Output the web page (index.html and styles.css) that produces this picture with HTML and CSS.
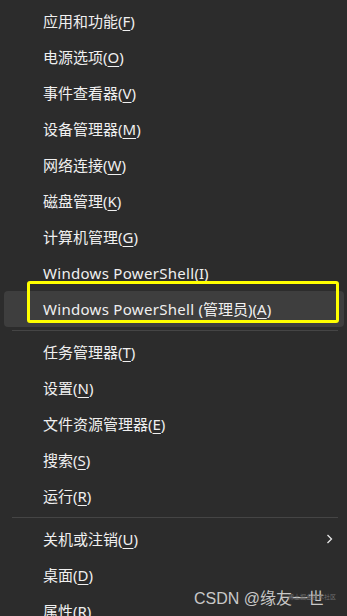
FILE: index.html
```html
<!DOCTYPE html>
<html lang="zh-CN">
<head>
<meta charset="utf-8">
<title>Menu</title>
<link rel="stylesheet" href="styles.css">
</head>
<body>
<div class="menu">
  <div class="item">应用和功能(<u>F</u>)</div>
  <div class="item">电源选项(<u>O</u>)</div>
  <div class="item">事件查看器(<u>V</u>)</div>
  <div class="item">设备管理器(<u>M</u>)</div>
  <div class="item">网络连接(<u>W</u>)</div>
  <div class="item">磁盘管理(<u>K</u>)</div>
  <div class="item">计算机管理(<u>G</u>)</div>
  <div class="item"><span class="lat">Windows PowerShell</span>(<u>I</u>)</div>
  <div class="item hot"><span class="lat">Windows PowerShell </span>(管理员)(<u>A</u>)<span class="mark"></span></div>
  <div class="sep"></div>
  <div class="item">任务管理器(<u>T</u>)</div>
  <div class="item">设置(<u>N</u>)</div>
  <div class="item">文件资源管理器(<u>E</u>)</div>
  <div class="item">搜索(<u>S</u>)</div>
  <div class="item">运行(<u>R</u>)</div>
  <div class="sep"></div>
  <div class="item sub">关机或注销(<u>U</u>)<svg class="chev" width="7" height="10" viewBox="0 0 7 10"><path d="M1.5 1 L5.5 5 L1.5 9" fill="none" stroke="#e8e8e8" stroke-width="1.3"/></svg></div>
  <div class="item">桌面(<u>D</u>)</div>
  <div class="item">属性(<u>R</u>)</div>
</div>
<div class="wm"><span class="wm-bg">稀土掘金技术社区</span>CSDN @缘友一世</div>
</body>
</html>
```
FILE: styles.css
```css
html, body {
  margin: 0;
  padding: 0;
  background: #2c2c2c;
  width: 347px;
  height: 616px;
  overflow: hidden;
}
.menu {
  padding-top: 3px;
  font-family: "Noto Sans", "Noto Sans CJK SC", sans-serif;
  font-size: 15px;
  color: #f0f0f0;
}
.item {
  position: relative;
  height: 36px;
  line-height: 36px;
  padding-left: 43px;
  white-space: nowrap;
}
.lat {
  letter-spacing: 0.3px;
}
.item u {
  text-decoration-thickness: 1px;
  text-underline-offset: 3px;
}
.hot {
  margin: 0 3px 0 4px;
  padding-left: 39px;
  background: #3e3e3e;
  border-radius: 4px;
}
.mark {
  position: absolute;
  left: 23px;
  top: -10px;
  width: 306px;
  height: 36px;
  border: 3.5px solid #ffff00;
  border-radius: 3px;
}
.sep {
  height: 7px;
  display: flex;
  align-items: center;
  padding: 0 9px 0 12px;
}
.sep::before {
  content: "";
  flex: 1;
  height: 1px;
  background: #454545;
}
.chev {
  position: absolute;
  right: 14px;
  top: 13px;
}
.wm {
  position: absolute;
  left: 194px;
  top: 585px;
  font-family: "Liberation Sans", "Noto Sans CJK SC", sans-serif;
  font-size: 16px;
  color: #c8c8c8;
  white-space: nowrap;
}
.wm-bg {
  position: absolute;
  left: 94px;
  top: 7px;
  font-size: 6px;
  color: #6e6e6e;
}
```
